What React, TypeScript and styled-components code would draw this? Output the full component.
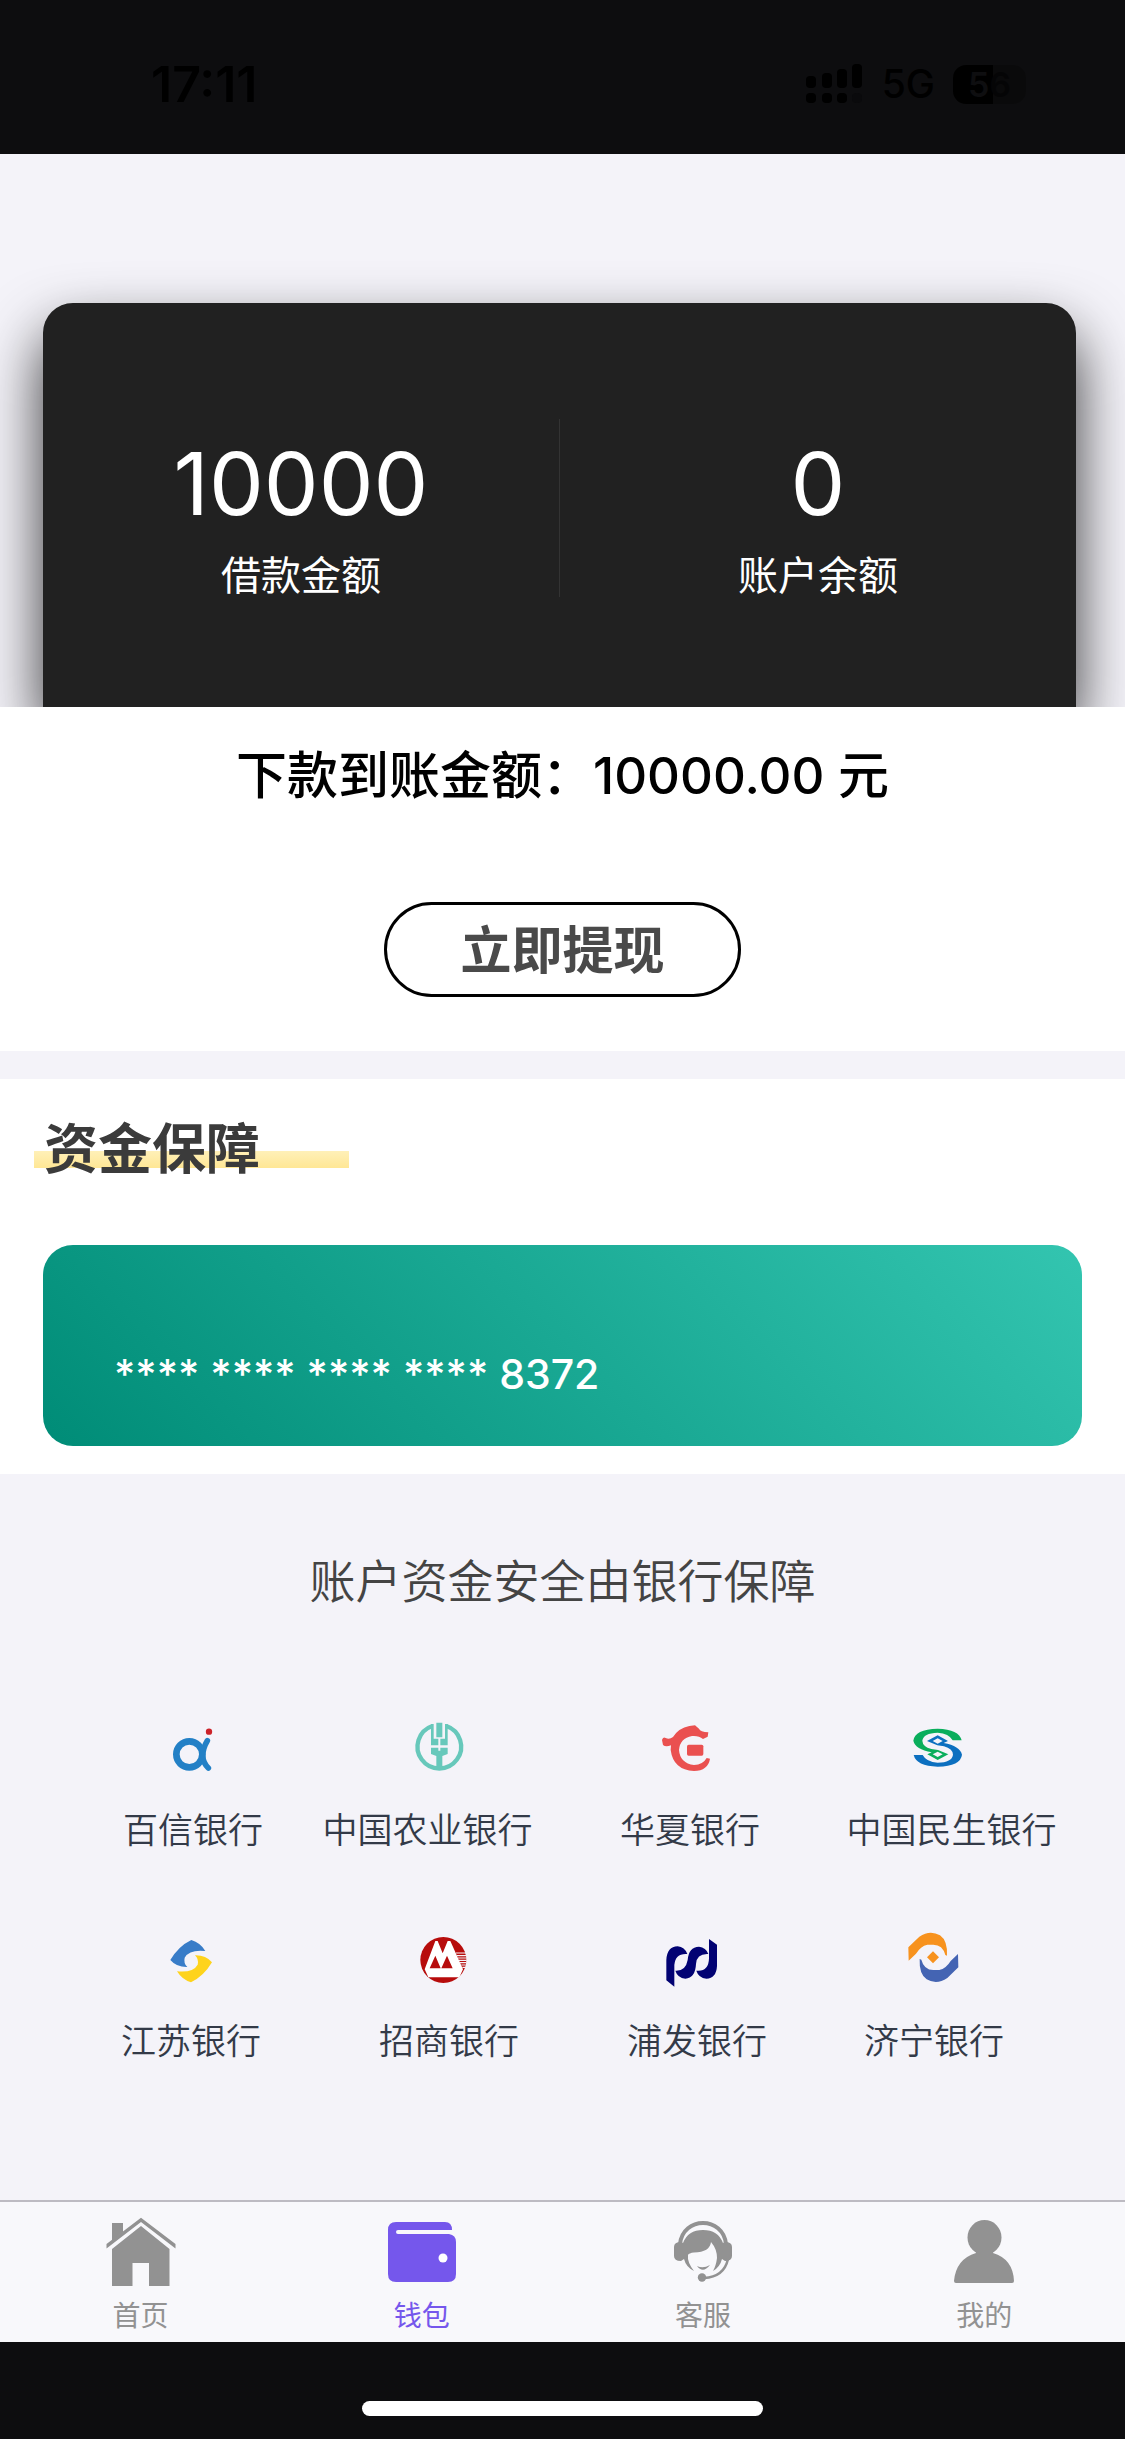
import React from "react";
import styled, { createGlobalStyle } from "styled-components";

const GlobalStyle = createGlobalStyle`
  *, *::before, *::after { box-sizing: border-box; }
  body {
    margin: 0;
    background: #f4f3f9;
    font-family: Inter, "Noto Sans CJK SC", sans-serif;
  }
  h1, h2, p, ul { margin: 0; padding: 0; }
`;

const Page = styled.div`
  display: flex;
  flex-direction: column;
  min-height: 100vh;
  background: #f4f3f9;
`;

/* ---------- status bar ---------- */

const StatusBar = styled.header`
  display: flex;
  align-items: center;
  justify-content: space-between;
  height: 154px;
  padding: 14px 99px 0 151px;
  background: #0d0d0f;
  color: #000;
`;

const Clock = styled.time`
  font-size: 50px;
  line-height: 56px;
  font-weight: 600;
`;

const StatusIcons = styled.div`
  display: flex;
  align-items: center;
  gap: 18px;
`;

const Network = styled.span`
  font-size: 39px;
  line-height: 48px;
  font-weight: 500;
`;

const Battery = styled.span`
  display: flex;
  align-items: center;
  justify-content: center;
  width: 73px;
  height: 39px;
  border-radius: 13px;
  background: linear-gradient(90deg, #000 55%, #0a0a0b 55%);
  font-size: 34px;
  line-height: 39px;
  font-weight: 600;
  color: #0e0e10;
`;

const BatteryRest = styled.span`
  color: #050506;
`;

/* ---------- balance card ---------- */

const Hero = styled.section`
  padding: 149px 49px 0 43px;
  overflow: hidden;
`;

const BalanceCard = styled.div`
  display: flex;
  height: 404px;
  padding: 116px 0 110px;
  border-radius: 30px 30px 0 0;
  background: #212121;
  color: #fff;
  box-shadow: 0 30px 60px rgba(0, 0, 0, 0.8);
`;

const Stat = styled.div`
  flex: 1;
  display: flex;
  flex-direction: column;
  align-items: center;
  gap: 22px;
  padding-top: 19px;

  & + & {
    border-left: 1px solid #333;
  }
`;

const StatValue = styled.strong`
  font-size: 87px;
  line-height: 92px;
  font-weight: 400;
`;

const StatLabel = styled.span`
  font-size: 40px;
  line-height: 48px;
`;

/* ---------- payout ---------- */

const Payout = styled.section`
  display: flex;
  flex-direction: column;
  align-items: center;
  gap: 94px;
  padding: 37px 0 54px;
  background: #fff;
`;

const PayoutText = styled.p`
  font-size: 51px;
  line-height: 64px;
  font-weight: 500;
  color: #000;
`;

const WithdrawButton = styled.button`
  height: 95px;
  padding: 2px 73px 0;
  border: 3px solid #000;
  border-radius: 48px;
  background: #fff;
  font-family: inherit;
  font-size: 51px;
  line-height: 64px;
  font-weight: 600;
  color: #4a4a4a;
`;

/* ---------- guarantee ---------- */

const Guarantee = styled.section`
  display: flex;
  flex-direction: column;
  align-items: flex-start;
  gap: 63px;
  margin-top: 28px;
  padding: 39px 43px 28px 34px;
  background: #fff;
`;

const SectionTitle = styled.h2`
  width: 315px;
  padding-left: 10px;
  font-size: 54px;
  line-height: 64px;
  font-weight: 600;
  color: #3b3b3b;
  background: linear-gradient(#fff0b8, #ffe795) 0 33px / 100% 17px no-repeat;
`;

const BankCard = styled.div`
  display: flex;
  align-items: flex-end;
  align-self: stretch;
  height: 201px;
  margin-left: 9px;
  padding: 0 71px 48px;
  border-radius: 30px;
  background: linear-gradient(45deg, #008c77, #33c5b0);
`;

const CardNumber = styled.span`
  font-size: 41px;
  line-height: 48px;
  font-weight: 500;
  color: #fff;
`;

/* ---------- banks ---------- */

const Banks = styled.section`
  flex: 1;
  padding-top: 75px;
`;

const BanksTitle = styled.h2`
  font-size: 46px;
  line-height: 64px;
  font-weight: 350;
  text-align: center;
  color: #444;
`;

const BankRows = styled.div`
  display: flex;
  flex-direction: column;
  gap: 75px;
  padding-top: 105px;
`;

const BankRow = styled.ul<{ $columns: string }>`
  display: grid;
  grid-template-columns: ${(p) => p.$columns};
  list-style: none;
`;

const BankItem = styled.li`
  display: flex;
  flex-direction: column;
  align-items: center;
  gap: 28px;
  font-size: 35px;
  line-height: 48px;
  font-weight: 350;
  white-space: nowrap;
  color: #333a48;

  &:first-child {
    grid-column: 2;
  }
`;

const BankLogo = styled.svg`
  width: 96px;
  height: 60px;
`;

/* ---------- tab bar ---------- */

const TabBar = styled.nav`
  display: flex;
  border-top: 2px solid #bdbbc2;
  background: #f8f8fb;
`;

const Tab = styled.a<{ $active?: boolean }>`
  flex: 1;
  display: flex;
  flex-direction: column;
  align-items: center;
  gap: 8px;
  padding: 14px 0 6px;
  font-size: 28px;
  line-height: 40px;
  font-weight: 400;
  text-decoration: none;
  color: ${(p) => (p.$active ? "#7557ec" : "#929292")};
`;

const TabIcon = styled.svg`
  width: 72px;
  height: 72px;
  fill: currentColor;
`;

const HomeArea = styled.footer`
  display: flex;
  justify-content: center;
  height: 97px;
  padding-top: 59px;
  background: #0d0d0f;
`;

const HomeIndicator = styled.div`
  width: 401px;
  height: 15px;
  border-radius: 8px;
  background: #fff;
`;

interface Bank {
  name: string;
  viewBox: string;
  art: React.ReactNode;
}

const minsheng =
  "M1083 121H1056Q1045 100 1011 98Q968 99 965 122Q966 140 992 147L1012 150L1043 163L1011 180L980 163L993 157Q944 148 938 122Q942 88 1011 86Q1075 88 1083 121ZM1011 155L996 163L1011 171L1026 163Z";
const jiangsu =
  "M211 150Q236 108 274 90Q301 98 316 123Q268 118 254 143Q250 160 262 171Q230 172 211 150Z";
const jining =
  "M925 112L958 80Q990 58 1020 76Q1043 92 1041 137L1036 135Q1028 104 1000 104H982Q962 108 948 131L926 152Z";

const firstRow: Bank[] = [
  {
    name: "百信银行",
    viewBox: "135 54 288 180",
    art: (
      <>
        <g fill="none" stroke="#2380c6" strokeLinecap="round">
          <circle cx="268" cy="163" r="39" strokeWidth="20" />
          <path d="M322 122Q308 145 308 168Q310 190 325 204" strokeWidth="17" />
        </g>
        <circle cx="327" cy="95" r="9.5" fill="#cc2229" />
      </>
    ),
  },
  {
    name: "中国农业银行",
    viewBox: "838 54 288 180",
    art: (
      <>
        <path
          d="M1037 78A65.5 65.5 0 1 1 995 78"
          fill="none"
          stroke="#67c8bb"
          strokeWidth="13"
        />
        <path
          d="M1007 68H1025V112H1007ZM991 72H999V116H1013V136H991ZM1041 72H1033V116H1019V136H1041ZM991 143H1013V152L1019 152V143H1041V162L1025 168V208H1007V168L991 162Z"
          fill="#67c8bb"
        />
      </>
    ),
  },
  {
    name: "华夏银行",
    viewBox: "126 54 288 180",
    art: (
      <g fill="#ea5050">
        <path d="M186 120Q189 109 197 114Q208 120 219 111Q236 84 268 78L285 76L297 86Q301 96 325 97L323 110L309 117Q296 106 276 108Q240 114 237 150Q240 190 282 195Q309 194 320 174L330 176Q324 212 282 213Q220 210 212 150L213 136Q197 142 189 135Z" />
        <rect x="261" y="134" width="49" height="33" rx="5" />
      </g>
    ),
  },
  {
    name: "中国民生银行",
    viewBox: "910 54 288 180",
    art: (
      <>
        <path d={minsheng} fill="#0aae5c" fillRule="evenodd" />
        <path
          d={minsheng}
          fill="#0c6fc0"
          fillRule="evenodd"
          transform="rotate(180 1011 143)"
        />
      </>
    ),
  },
];

const secondRow: Bank[] = [
  {
    name: "江苏银行",
    viewBox: "129 57 288 180",
    art: (
      <>
        <path d={jiangsu} fill="#387cc8" />
        <path d={jiangsu} fill="#fed31c" transform="rotate(180 273.5 153.5)" />
      </>
    ),
  },
  {
    name: "招商银行",
    viewBox: "903 57 288 180",
    art: (
      <>
        <circle cx="1030" cy="150" r="69" fill="#b70c0c" />
        <path
          d="M1068 129H1100M1071 137H1100M1074 144H1100M1077 151H1100M1080 158H1098M1084 165H1097M1087 172H1095"
          stroke="#f4f3f9"
          strokeWidth="3.5"
        />
        <path
          d="M1006 93H1013L1028 130L1043 93H1051L1089 178L1078 202H985L974 178Z"
          fill="#fff"
        />
        <path d="M1006 137L1022 175H989ZM1041 137L1058 175H1024Z" fill="#b70c0c" />
      </>
    ),
  },
  {
    name: "浦发银行",
    viewBox: "147 57 288 180",
    art: (
      <path
        fill="#020273"
        d="M199 211V150Q201 110 233 109Q254 111 262 132Q226 129 223 165V230ZM226 182Q257 184 263 150Q266 111 297 110Q318 112 325 132Q290 130 288 162Q286 204 256 206Q233 204 226 182ZM289 182Q326 186 327 145V87L351 104V168Q349 205 319 206Q296 204 289 182Z"
      />
    ),
  },
  {
    name: "济宁银行",
    viewBox: "858 57 288 180",
    art: (
      <>
        <path d={jining} fill="#f7921e" />
        <path d={jining} fill="#4464b3" transform="rotate(180 1000 142)" />
        <path d="M999 124L1017 142L999 160L981 142Z" fill="#f7921e" />
      </>
    ),
  },
];

const tabs = [
  {
    label: "首页",
    art: (
      <>
        <path d="M7 7H18V16L7 25Z" />
        <path d="M1.500 28L36 1.700L70.500 28V32.500L36 6L1.500 32.500Z" />
        <path d="M36 10L64.500 33V70H44V47H27.500V70H7V33Z" />
      </>
    ),
  },
  {
    label: "钱包",
    active: true,
    art: (
      <>
        <path d="M10 6H59Q66 6 66 14H12Q10 14 10 16Q10 18 12 18H63Q70 19 70 26V58Q70 66 62 66H10Q2 66 2 58V14Q2 6 10 6Z" />
        <circle cx="57" cy="42" r="4.500" fill="#fff" />
      </>
    ),
  },
  {
    label: "客服",
    art: (
      <>
        <path
          d="M13 28C16 0 56 0 59 28"
          fill="none"
          stroke="currentColor"
          strokeWidth="4"
        />
        <path d="M14 26Q7 26 7 31V40Q7 45 14 45L17 43Q19 51 27 55Q20 46 21 39Q22 37 27 36.500Q43 36 44 26Q50 33 50 42Q49 50 46 55Q53 51 55 43L58 45Q65 45 65 40V31Q65 26 58 26L56 27Q51 14 36 14Q21 14 16 27Z" />
        <path d="M30 50Q36 53 43 49Q36 58 30 50Z" />
        <path
          d="M61 43Q57 61 37 62"
          fill="none"
          stroke="currentColor"
          strokeWidth="2.500"
        />
        <circle cx="35" cy="61.500" r="4.200" />
      </>
    ),
  },
  {
    label: "我的",
    art: (
      <>
        <ellipse cx="36.500" cy="21.500" rx="17" ry="17.500" />
        <path d="M28 36H45V37Q65 43 66 65Q66 67 64 67H8Q6 67 6 65Q8 43 28 37Z" />
      </>
    ),
  },
];

function BankList({ banks, columns }: { banks: Bank[]; columns: string }) {
  return (
    <BankRow $columns={columns}>
      {banks.map((bank) => (
        <BankItem key={bank.name}>
          <BankLogo viewBox={bank.viewBox} aria-hidden="true">
            {bank.art}
          </BankLogo>
          {bank.name}
        </BankItem>
      ))}
    </BankRow>
  );
}

export default function App() {
  return (
    <Page>
      <GlobalStyle />
      <StatusBar>
        <Clock>17:11</Clock>
        <StatusIcons>
          <svg width="58" height="40" viewBox="0 0 58 40" aria-hidden="true">
            <rect x="0" y="12" width="10" height="12" rx="4" />
            <rect x="16" y="9" width="10" height="15" rx="4" />
            <rect x="31" y="5" width="10" height="19" rx="4" />
            <rect x="46" y="0" width="10" height="24" rx="4" />
            <rect x="0" y="29" width="10" height="10" rx="4" />
            <rect x="16" y="29" width="10" height="10" rx="4" />
            <rect x="31" y="29" width="10" height="10" rx="4" />
            <rect x="46" y="29" width="10" height="10" rx="4" fill="#0a0a0c" />
          </svg>
          <Network>5G</Network>
          <Battery>
            5<BatteryRest>6</BatteryRest>
          </Battery>
        </StatusIcons>
      </StatusBar>

      <Hero>
        <BalanceCard>
          <Stat>
            <StatValue>10000</StatValue>
            <StatLabel>借款金额</StatLabel>
          </Stat>
          <Stat>
            <StatValue>0</StatValue>
            <StatLabel>账户余额</StatLabel>
          </Stat>
        </BalanceCard>
      </Hero>

      <Payout>
        <PayoutText>下款到账金额：10000.00 元</PayoutText>
        <WithdrawButton type="button">立即提现</WithdrawButton>
      </Payout>

      <Guarantee>
        <SectionTitle>资金保障</SectionTitle>
        <BankCard>
          <CardNumber>**** **** **** **** 8372</CardNumber>
        </BankCard>
      </Guarantee>

      <Banks>
        <BanksTitle>账户资金安全由银行保障</BanksTitle>
        <BankRows>
          <BankList banks={firstRow} columns="76fr 234fr 235fr 290fr 233fr 57fr" />
          <BankList banks={secondRow} columns="60fr 262fr 254fr 242fr 232fr 75fr" />
        </BankRows>
      </Banks>

      <TabBar>
        {tabs.map((tab) => (
          <Tab key={tab.label} href="#" $active={tab.active}>
            <TabIcon viewBox="0 0 72 72" aria-hidden="true">
              {tab.art}
            </TabIcon>
            {tab.label}
          </Tab>
        ))}
      </TabBar>
      <HomeArea>
        <HomeIndicator />
      </HomeArea>
    </Page>
  );
}
